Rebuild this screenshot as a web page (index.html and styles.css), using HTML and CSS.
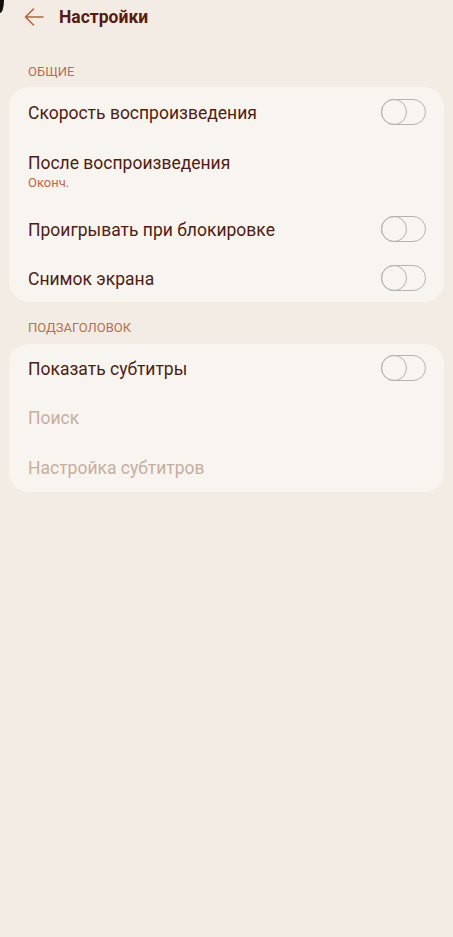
FILE: index.html
```html
<!DOCTYPE html>
<html lang="ru">
<head>
<meta charset="utf-8">
<link rel="stylesheet" href="styles.css">
</head>
<body>
<div class="corner"></div>
<header class="topbar">
  <svg class="back" width="20" height="20" viewBox="0 0 20 20"><path d="M19 10H1.5M9.5 2L1.5 10L9.5 18" fill="none" stroke="#b8643c" stroke-width="1.6" stroke-linecap="round" stroke-linejoin="round"/></svg>
  <h1 class="title">Настройки</h1>
</header>
<main class="content">
  <div class="section-label first">ОБЩИЕ</div>
  <section class="card">
    <div class="row"><span class="label">Скорость воспроизведения</span><span class="toggle"></span></div>
    <div class="row tall"><div class="stack"><span class="label">После воспроизведения</span><span class="sub">Оконч.</span></div></div>
    <div class="row"><span class="label">Проигрывать при блокировке</span><span class="toggle"></span></div>
    <div class="row short"><span class="label">Снимок экрана</span><span class="toggle"></span></div>
  </section>
  <div class="section-label">ПОДЗАГОЛОВОК</div>
  <section class="card">
    <div class="row short"><span class="label">Показать субтитры</span><span class="toggle"></span></div>
    <div class="row"><span class="label disabled">Поиск</span></div>
    <div class="row"><span class="label disabled">Настройка субтитров</span></div>
  </section>
</main>
</body>
</html>
```
FILE: styles.css
```css
html, body {
  margin: 0;
  padding: 0;
  background: #f3ece5;
  font-family: Roboto, "Noto Sans", sans-serif;
}
body {
  width: 453px;
  height: 937px;
  overflow: hidden;
  position: relative;
}
.corner {
  position: absolute;
  left: 0;
  top: 0;
  width: 4px;
  height: 13px;
  background: #111;
  border-bottom-right-radius: 4px 13px;
}
.topbar {
  display: flex;
  align-items: center;
  height: 33px;
  padding-left: 24px;
}
.back {
  display: block;
}
.title {
  margin: 0 0 0 15px;
  font-size: 17.5px;
  font-weight: 700;
  color: #5a1a0e;
}
.content {
  padding: 0 9px;
}
.section-label {
  padding: 18px 0 0 19px;
  height: 24px;
  font-size: 13px;
  color: #b6704a;
  line-height: 16px;
}
.section-label.first {
  padding-top: 31px;
  height: 23px;
}
.card {
  background: #f8f4ef;
  border-radius: 20px;
  padding: 0 19px;
}
.row {
  display: flex;
  align-items: center;
  justify-content: space-between;
  height: 50px;
}
.row.short {
  height: 48px;
}
.row.tall {
  height: 67px;
  align-items: flex-start;
}
.stack {
  display: flex;
  flex-direction: column;
  padding-top: 15px;
}
.label {
  font-size: 17.5px;
  color: #4f1c12;
  line-height: 22px;
  padding-top: 2px;
}
.stack .label {
  padding-top: 0;
}
.label.disabled {
  color: #c6ae9f;
}
.sub {
  font-size: 13px;
  color: #c2683b;
  line-height: 16px;
  margin-top: 1px;
}
.toggle {
  position: relative;
  width: 43px;
  height: 24px;
  border: 1.5px solid #b7b2ad;
  border-radius: 14px;
  box-sizing: content-box;
  margin-right: -1px;
}
.toggle::before {
  content: "";
  position: absolute;
  left: -1.5px;
  top: -1.5px;
  width: 24px;
  height: 24px;
  border: 1.5px solid #b7b2ad;
  border-radius: 50%;
}
```
